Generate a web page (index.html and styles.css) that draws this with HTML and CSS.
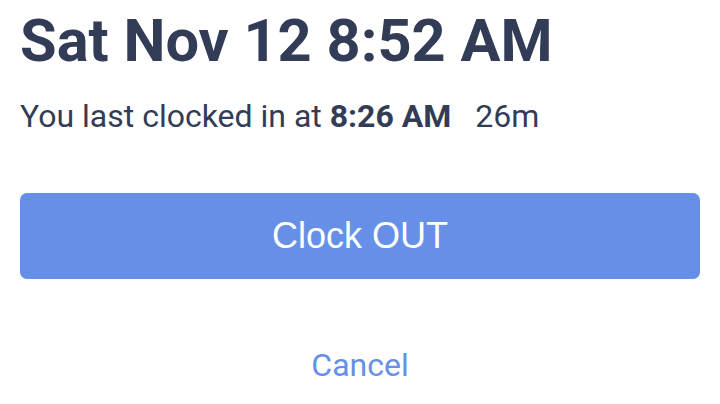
FILE: index.html
```html
<!DOCTYPE html>
<html>
<head>
<meta charset="utf-8">
<link rel="stylesheet" href="styles.css">
</head>
<body>
<div class="panel">
  <h1 class="title">Sat Nov 12 8:52 AM</h1>
  <p class="status">You last clocked in at <b>8:26 AM</b><span class="dur">26m</span></p>
  <button class="primary">Clock OUT</button>
  <a class="cancel">Cancel</a>
</div>
</body>
</html>
```
FILE: styles.css
```css
html, body {
  margin: 0;
  padding: 0;
  background: #ffffff;
}
.panel {
  display: flex;
  flex-direction: column;
  padding: 0 20px;
  font-family: Roboto, "Liberation Sans", sans-serif;
  color: #323c56;
}
.title {
  margin: 6px 0 0 0;
  font-size: 59.5px;
  line-height: 70px;
  font-weight: 700;
}
.status {
  margin: 22px 0 0 0;
  font-size: 32px;
  line-height: 36px;
}
.status b {
  font-weight: 700;
}
.dur {
  margin-left: 24px;
}
.primary {
  margin-top: 59px;
  height: 86px;
  border: none;
  border-radius: 7px;
  background: #6690e8;
  color: #ffffff;
  font-family: "Liberation Sans", Arial, sans-serif;
  font-size: 36px;
  padding: 0;
}
.cancel {
  align-self: center;
  margin-top: 68px;
  font-size: 32px;
  line-height: 36px;
  color: #6690e8;
}
```
